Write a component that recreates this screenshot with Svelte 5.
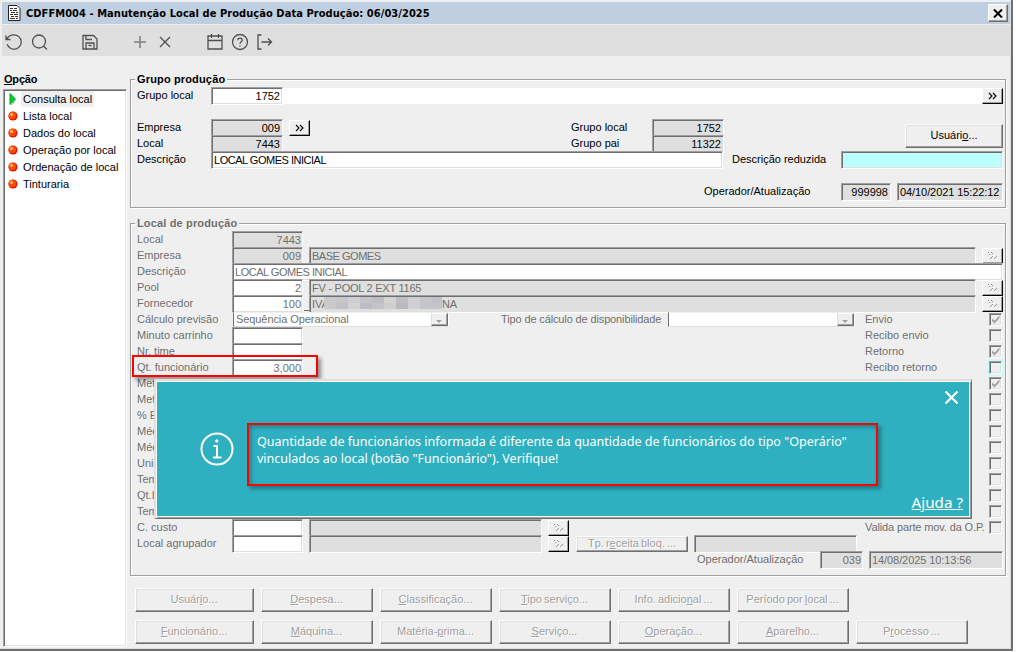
<script lang="ts">
  const options = ['Consulta local', 'Lista local', 'Dados do local', 'Operação por local', 'Ordenação de local', 'Tinturaria'];

  const hiddenRows = ['Met', 'Met', '% E', 'Méd', 'Méd', 'Unid', 'Tem', 'Qt.L', 'Tem'];

  // underlined access key sits between `pre` and `post`
  const actions = [
    [
      { pre: 'Usuár', key: 'i', post: 'o...' },
      { pre: '', key: 'D', post: 'espesa...' },
      { pre: '', key: 'C', post: 'lassificação...' },
      { pre: '', key: 'T', post: 'ipo serviço...' },
      { pre: 'Info. adicio', key: 'n', post: 'al ...' },
      { pre: 'Período por ', key: 'l', post: 'ocal ...' }
    ],
    [
      { pre: '', key: 'F', post: 'uncionário...' },
      { pre: '', key: 'M', post: 'áquina...' },
      { pre: 'Matéria-', key: 'p', post: 'rima...' },
      { pre: '', key: 'S', post: 'erviço...' },
      { pre: '', key: 'O', post: 'peração...' },
      { pre: '', key: 'A', post: 'parelho...' },
      { pre: 'P', key: 'r', post: 'ocesso ...' }
    ]
  ];

  const mosaic = ['#c9c8cb', '#c4c6ca', '#cfcfd1', '#c3c3c8', '#bdbdc3', '#d3d3d4', '#bebec4', '#d0d0d2', '#c6c6ca', '#bfc1c6', '#cbc9cc', '#c0c2c8', '#d2d2d2', '#bdbcc2', '#c4c4c8', '#cecece', '#b9b8bf', '#cfd0d3', '#c2c5cb', '#c5c4c6'];

  let selected = $state(0);
</script>

{#snippet check(on: boolean, hot = false)}
  <span class="check" class:hot>
    {#if on}
      <svg width="9" height="9" viewBox="0 0 9 9"><path d="M1 3.500v2.600L3.500 8.500 8.500 3V.6L3.500 5.800z" fill="#9f9f9f" /></svg>
    {/if}
  </span>
{/snippet}

{#snippet more(off: boolean)}
  <button class="more" aria-label="Pesquisar">
    {#if off}
      <svg width="11" height="8" viewBox="0 0 11 8" shape-rendering="crispEdges"><path d="M1 0h1v1H1zM4 0h1v1H4zM2 2h1v1H2zM5 1h1v1H5zM5 4h1v1H5zM4 5h1v1H4zM3 6h1v1H3zM9 4h1v1H9zM8 5h1v1H8zM7 6h1v1H7z" fill="#8f8f8f" /><path d="M6 5h1v1H6zM5 6h1v1H5zM4 7h1v1H4zM10 5h1v1H10zM9 6h1v1H9zM8 7h1v1H8z" fill="#fff" /></svg>
    {:else}
      <svg width="9" height="8" viewBox="0 0 9 8" fill="none" stroke="#000" stroke-width="1.100"><path d="M1 1l3 3-3 3M5 1l3 3-3 3" /></svg>
    {/if}
  </button>
{/snippet}

<div class="window">
  <header class="titlebar">
    <svg class="doc" width="13" height="16" viewBox="0 0 13 16"><path d="M.5.5H9L12 3.500V15.500H.5z" fill="#fff" stroke="#222" /><path d="M2 3.500h3M6 3.500h3M2 5.500h2M5 5.500h4M3 7.500h4M8 7.500h2M2 9.500h3M6 9.500h4M3 11.500h3M7 11.500h3M2 13.500h5M8 13.500h2" stroke="#333" /></svg>
    <h1>CDFFM004 - Manutenção Local de Produção Data Produção: 06/03/2025</h1>
    <button class="close" aria-label="Fechar">
      <svg width="10" height="9" viewBox="0 0 10 9"><path d="M1 .5l8 8M9 .5l-8 8" stroke="#000" stroke-width="2" /></svg>
    </button>
  </header>

  <div class="toolbar">
    <svg width="18" height="18" viewBox="0 0 18 18"><path d="M1 2.500v4h4.500M1.500 6.500C3 3.300 5.800 1.800 9 1.800a7.200 7.200 0 1 1-6.800 9.500" /></svg>
    <svg class="search" width="18" height="18" viewBox="0 0 18 18"><circle cx="8" cy="8.500" r="6.500" /><path d="M12.700 13.200l3.300 3.300" /></svg>
    <svg class="save" width="18" height="18" viewBox="0 0 18 18"><path d="M2 2.500h10.500l3.500 3.500v10H2zM5 16V10h8v6M5 2.500v4h6M7.500 12.500h3" /></svg>
    <svg class="add" width="18" height="18" viewBox="0 0 18 18"><path d="M9 3v12M3 9h12" /></svg>
    <svg class="del" width="18" height="18" viewBox="0 0 18 18"><path d="M4 4l10 10M14 4L4 14" /></svg>
    <svg class="cal" width="18" height="18" viewBox="0 0 18 18"><path d="M2 3h14v13H2zM2 7.500h14M5.500 1v4M12.500 1v4" /></svg>
    <svg class="help" width="18" height="18" viewBox="0 0 18 18"><circle cx="9" cy="9" r="7.500" /><path d="M6.700 7.200C6.800 4.500 11.400 4.600 11.300 7.200 11.200 8.800 9 8.800 9 10.700M9 12.200v1.300" /></svg>
    <svg class="exit" width="18" height="18" viewBox="0 0 18 18"><path d="M5.500 2H2v14h3.500M5.500 9h10M12 5.500L15.500 9 12 12.500" /></svg>
  </div>

  <main>
    <aside>
      <h2><u>O</u>pção</h2>
      <ul>
        {#each options as option, i}
          <li>
            <button class="option" onclick={() => (selected = i)}>
              {#if selected === i}
                <svg width="10" height="12" viewBox="0 0 10 12"><path d="M2 .5L7.500 6 2 11.500z" fill="#0c3" stroke="#0a2" /><path d="M4 11.500L7.500 7" stroke="#446" stroke-dasharray="1 1" /></svg>
              {:else}
                <svg width="10" height="12" viewBox="0 0 10 12"><circle cx="5" cy="6" r="4.600" fill="#dc1c00" /><circle cx="4.400" cy="5.400" r="3.700" fill="#ff4a00" /><circle cx="3.600" cy="4.400" r="1.600" fill="#ffb060" /></svg>
              {/if}
              <span class:current={selected === i}>{option}</span>
            </button>
          </li>
        {/each}
      </ul>
    </aside>

    <div class="content">
      <section class="group first">
        <h3>Grupo produção</h3>
        <div class="row">
          <span class="label">Grupo local</span>
          <span class="field num">1752</span>
          <span class="strip"></span>
          {@render more(false)}
        </div>
        <div class="row"></div>
        <div class="row">
          <span class="label">Empresa</span>
          <span class="field num ro">009</span>
          <span class="gap6"></span>
          {@render more(false)}
          <span class="label parent">Grupo local</span>
          <span class="field num ro">1752</span>
          <button class="btn user">Usuári<u>o</u>...</button>
        </div>
        <div class="row">
          <span class="label">Local</span>
          <span class="field num ro">7443</span>
          <span class="label parent second">Grupo pai</span>
          <span class="field num ro">11322</span>
        </div>
        <div class="row">
          <span class="label">Descrição</span>
          <span class="field name caps">LOCAL GOMES INICIAL</span>
          <span class="label short">Descrição reduzida</span>
          <span class="field hot"></span>
        </div>
        <div class="row"></div>
        <div class="row audit">
          <span class="label">Operador/Atualização</span>
          <span class="field num ro who">999998</span>
          <span class="field ro when">04/10/2021 15:22:12</span>
        </div>
      </section>

      <section class="group second-group">
        <h3>Local de produção</h3>
        <div class="row">
          <span class="label">Local</span>
          <span class="field num ro">7443</span>
        </div>
        <div class="row">
          <span class="label">Empresa</span>
          <span class="field num ro">009</span>
          <span class="field ro desc caps">BASE GOMES</span>
          {@render more(true)}
        </div>
        <div class="row">
          <span class="label">Descrição</span>
          <span class="field wide caps">LOCAL GOMES INICIAL</span>
        </div>
        <div class="row">
          <span class="label">Pool</span>
          <span class="field num">2</span>
          <span class="field ro desc pool">FV - POOL 2 EXT 1165</span>
          {@render more(true)}
        </div>
        <div class="row">
          <span class="label">Fornecedor</span>
          <span class="field num">100</span>
          <span class="stub"></span>
          <span class="field ro desc supplier">IVA<span class="mosaic">{#each mosaic as tone}<i style:background={tone}></i>{/each}</span>NA</span>
          {@render more(true)}
        </div>
        <div class="row">
          <span class="label">Cálculo previsão</span>
          <span class="combo">Sequência Operacional<b></b></span>
          <span class="label avail">Tipo de cálculo de disponibilidade</span>
          <span class="combo small"><b></b></span>
          <span class="label flag">Envio</span>
          {@render check(true)}
        </div>
        <div class="row">
          <span class="label">Minuto carrinho</span>
          <span class="field num"></span>
          <span class="label flag">Recibo envio</span>
          {@render check(false)}
        </div>
        <div class="row">
          <span class="label">Nr. time</span>
          <span class="field num"></span>
          <span class="label flag">Retorno</span>
          {@render check(true)}
        </div>
        <div class="row">
          <span class="label">Qt. funcionário</span>
          <span class="field num">3,000</span>
          <span class="label flag">Recibo retorno</span>
          {@render check(false, true)}
        </div>
        {#each hiddenRows as label, i}
          <div class="row">
            <span class="label">{label}</span>
            <span class="label flag"></span>
            {@render check(i === 0)}
          </div>
        {/each}
        <div class="row">
          <span class="label">C. custo</span>
          <span class="field num"></span>
          <span class="field ro cost"></span>
          {@render more(true)}
          <span class="label flag valid">Valida parte mov. da O.P.</span>
          {@render check(false)}
        </div>
        <div class="row">
          <span class="label">Local agrupador</span>
          <span class="field num"></span>
          <span class="field ro cost"></span>
          {@render more(true)}
          <button class="btn recipe" disabled>Tp. r<u>e</u>ceita bloq. ...</button>
          <span class="field ro block"></span>
        </div>
        <div class="row audit">
          <span class="label">Operador/Atualização</span>
          <span class="field num ro who">039</span>
          <span class="field ro when">14/08/2025 10:13:56</span>
        </div>
      </section>

      <div class="actions">
        {#each actions as line}
          <div class="line">
            {#each line as a}
              <button class="btn" disabled>{a.pre}<u>{a.key}</u>{a.post}</button>
            {/each}
          </div>
        {/each}
      </div>
    </div>
  </main>

  <div class="mark"></div>

  <div class="toast">
    <svg class="info" width="34" height="34" viewBox="0 0 34 34" fill="none" stroke="#fff" stroke-width="2"><circle cx="17" cy="17" r="15.500" /><path d="M13.500 14H17V25.500M13 25.500h8.500" /><circle cx="16.800" cy="9" r="1.200" fill="#fff" stroke-width="1" /></svg>
    <p>Quantidade de funcionários informada é diferente da quantidade de funcionários do tipo "Operário"<br />vinculados ao local (botão "Funcionário"). Verifique!</p>
    <svg class="dismiss" width="15" height="15" viewBox="0 0 15 15" stroke="#fff" stroke-width="2.200"><path d="M1.500 1.500l12 12M13.500 1.500l-12 12" /></svg>
    <a href="#ajuda">Ajuda ?</a>
  </div>
</div>

<style>
  :global(body) {
    background: #fff;
  }

  .window {
    position: relative;
    box-sizing: border-box;
    width: 1013px;
    height: 651px;
    padding: 2px 0 0 2px;
    background: #efefef;
    border-right: 2px solid #6f6f6f;
    border-bottom: 2px solid #6f6f6f;
    box-shadow: inset -1px -1px #dfdfdf;
    font: 11px/16px "Liberation Sans", Arial, sans-serif;
    color: #000;
  }

  button {
    font: inherit;
    color: inherit;
    padding: 0;
    margin: 0;
    border: 0;
    background: none;
  }

  .titlebar {
    display: flex;
    align-items: center;
    width: 1008px;
    height: 22px;
    background: #c0cfdf;
  }

  .doc {
    margin-left: 6px;
  }

  h1 {
    flex: 1;
    margin: 0 0 0 5px;
    padding-top: 1px;
    font: bold 11px/21px "DejaVu Sans Condensed", Tahoma, sans-serif;
    letter-spacing: 0.06px;
    white-space: nowrap;
  }

  .close {
    display: grid;
    place-items: center;
    width: 20px;
    height: 18px;
    margin-right: 2px;
    background: #efefef;
    border: 1px solid;
    border-color: #fff #6f6f6f #6f6f6f #fff;
    box-shadow: inset -1px -1px #9f9f9f;
    box-sizing: border-box;
  }

  .toolbar {
    display: flex;
    align-items: center;
    width: 1008px;
    height: 31px;
    margin-top: 1px;
    padding: 3px 0 0 3px;
    box-sizing: border-box;
    background: #dfdfdf;
  }

  .toolbar svg {
    fill: none;
    stroke: #505050;
    stroke-width: 1.3;
  }

  .search { margin-left: 8px; }
  .save { margin-left: 32px; }
  .toolbar .add {
    margin-left: 32px;
    stroke: #808080;
    stroke-width: 1.6;
  }
  .del { margin-left: 7px; }
  .cal { margin-left: 32px; }
  .help { margin-left: 7px; }
  .exit { margin-left: 7px; }

  main {
    display: flex;
    padding-top: 14px;
  }

  aside {
    width: 125px;
    margin-left: 1px;
  }

  h2, h3 {
    margin: 0;
    font-size: 11px;
    line-height: 16px;
    letter-spacing: 0.15px;
  }

  h2 {
    padding-left: 1px;
    height: 19px;
    line-height: 18px;
    letter-spacing: -0.2px;
  }

  ul {
    box-sizing: border-box;
    width: 124px;
    height: 558px;
    margin: 0;
    padding: 0 0 0 4px;
    list-style: none;
    background: #fff;
    border: 1px solid;
    border-color: #9f9f9f #fff #fff #9f9f9f;
    box-shadow: inset 1px 1px #6f6f6f, inset -1px -1px #dfdfdf;
  }

  .option {
    display: flex;
    align-items: center;
    height: 17px;
    gap: 3px;
    white-space: nowrap;
  }

  .option span {
    padding: 0 2px;
  }

  .option .current {
    background: #efefef;
  }

  .content {
    width: 877px;
    margin-left: 2px;
    padding-top: 9px;
  }

  .group {
    position: relative;
    box-sizing: border-box;
    width: 876px;
    padding: 7px 0 0 6px;
    border: 1px solid #9f9f9f;
    box-shadow: 1px 1px #fff, inset 1px 1px #fff;
  }

  .first {
    height: 129px;
  }

  .second-group {
    height: 353px;
    margin-top: 15px;
    color: #6f6f6f;
  }

  h3 {
    position: absolute;
    top: -9px;
    left: 4px;
    padding: 0 2px;
    background: #efefef;
    white-space: nowrap;
  }

  .row {
    display: flex;
    width: 866px;
    height: 16px;
  }

  .label {
    flex: none;
    width: 74px;
    white-space: nowrap;
  }

  .second-group .label {
    width: 95px;
  }

  .field {
    flex: none;
    box-sizing: border-box;
    height: 18px;
    padding: 0 2px;
    line-height: 16px;
    white-space: nowrap;
    background: #fff;
    border: 1px solid;
    border-color: #9f9f9f #fff #fff #9f9f9f;
    box-shadow: inset 1px 1px #6f6f6f, inset -1px -1px #dfdfdf;
  }

  .num {
    width: 72px;
    text-align: right;
  }

  .second-group .num {
    width: 71px;
    padding-right: 1px;
  }

  .ro {
    background: #dfdfdf;
  }

  .caps {
    letter-spacing: -0.48px;
  }

  .pool {
    letter-spacing: -0.25px;
  }

  .strip {
    width: 699px;
    height: 16px;
    margin-top: 1px;
    background: #fff;
  }

  .gap6 {
    flex: none;
    width: 6px;
  }

  .more {
    flex: none;
    display: grid;
    place-items: center;
    box-sizing: border-box;
    width: 21px;
    height: 16px;
    margin-top: 1px;
    background: #efefef;
    border: 1px solid;
    border-color: #fff #000 #000 #fff;
    box-shadow: inset -1px -1px #9f9f9f;
  }

  .row .parent {
    width: 81px;
    margin-left: 261px;
  }

  .row .second {
    margin-left: 288px;
  }

  .btn {
    box-sizing: border-box;
    height: 24px;
    padding-bottom: 2px;
    background: #efefef;
    border: 1px solid;
    border-color: #fff #6f6f6f #6f6f6f #fff;
    box-shadow: inset -1px -1px #9f9f9f, inset 1px 1px #dfdfdf;
    white-space: nowrap;
    word-spacing: -1px;
  }

  .btn:disabled {
    color: #9f9f9f;
    text-shadow: 1px 1px #fff;
  }

  .user {
    flex: none;
    width: 98px;
    margin: 5px 0 0 181px;
  }

  .name {
    width: 512px;
  }

  .row .short {
    width: 109px;
    margin-left: 9px;
  }

  .hot {
    width: 162px;
    background: #bff;
  }

  .audit {
    justify-content: flex-end;
  }

  .audit .label {
    width: 137px;
  }

  .second-group .audit .label {
    width: 123px;
  }

  .who {
    width: 50px;
    margin-right: 6px;
  }

  .when {
    width: 106px;
    letter-spacing: -0.08px;
  }

  .second-group .who {
    width: 43px;
  }

  .second-group .when {
    width: 134px;
  }

  .desc {
    width: 667px;
    margin: 0 6px;
  }

  .stub {
    width: 5px;
    height: 15px;
    margin-left: 1px;
    border-bottom: 1px solid #6f6f6f;
  }

  .supplier {
    display: flex;
    margin-left: 0;
  }

  .wide {
    width: 771px;
  }

  .mosaic {
    display: grid;
    grid-template-columns: repeat(10, 12px);
    grid-auto-rows: 6px;
    width: 118px;
    height: 12px;
    margin: 1px 0 0 -5px;
    overflow: hidden;
  }

  .combo {
    flex: none;
    display: flex;
    justify-content: space-between;
    box-sizing: border-box;
    width: 216px;
    height: 15px;
    margin: 1px 0 0 1px;
    padding-left: 2px;
    line-height: 13px;
    background: #fff;
    border: 1px solid;
    border-color: #efefef #fff #dfdfdf #6f6f6f;
    letter-spacing: -0.08px;
    white-space: nowrap;
  }

  .combo b {
    position: relative;
    width: 17px;
    height: 13px;
    box-sizing: border-box;
    background: #efefef;
    border: 1px solid;
    border-color: #fff #6f6f6f #6f6f6f #dfdfdf;
    box-shadow: inset -1px -1px #9f9f9f;
  }

  .combo b::after {
    content: '';
    position: absolute;
    left: 4px;
    top: 6px;
    border: 3px solid transparent;
    border-top-color: #9f9f9f;
    border-bottom: 0;
  }

  .second-group .avail {
    width: 167px;
    margin-left: 52px;
    letter-spacing: -0.13px;
  }

  .combo.small {
    width: 187px;
    margin-left: 0;
    justify-content: flex-end;
  }

  .second-group .flag {
    width: 124px;
    margin-left: auto;
  }

  .valid {
    letter-spacing: -0.13px;
  }

  .check {
    flex: none;
    box-sizing: border-box;
    display: block;
    width: 13px;
    height: 13px;
    margin: 2px 1px 0 0;
    border: 1px solid;
    border-color: #9f9f9f #fff #fff #9f9f9f;
    box-shadow: inset 1px 1px #6f6f6f, inset -1px -1px #dfdfdf;
  }

  .check svg {
    display: block;
    margin: 1px;
  }

  .check.hot {
    background: #efefef;
    outline: 1px solid #bff;
  }

  .cost {
    width: 233px;
    margin: 0 6px;
  }

  .recipe {
    width: 112px;
    height: 16px;
    margin: 1px 6px 0 7px;
    line-height: 13px;
  }

  .block {
    width: 163px;
  }

  .actions {
    padding: 12px 0 0 5px;
  }

  .line {
    display: flex;
    gap: 7px;
    margin-bottom: 8px;
  }

  .line .btn {
    width: 112px;
    padding-right: 1px;
  }

  .line .btn:first-child {
    width: 119px;
  }

  .mark {
    position: absolute;
    left: 132px;
    top: 355px;
    width: 182px;
    height: 18px;
    border: 2px solid #f00;
    box-shadow: 3px 3px 4px rgba(0, 0, 0, 0.4);
  }

  .toast {
    position: absolute;
    left: 154px;
    top: 379px;
    box-sizing: border-box;
    width: 818px;
    height: 140px;
    background: #2eb0c1;
    border-style: solid;
    border-width: 2px 1px 1px 2px;
    border-color: #dfdfdf #6f6f6f #6f6f6f #dfdfdf;
    box-shadow: inset 1px 1px #fff, inset -1px -1px #9f9f9f, inset -2px -2px #fff;
    color: #fff;
    font-family: "Noto Sans", "Segoe UI", sans-serif;
  }

  .info {
    position: absolute;
    left: 44px;
    top: 51px;
  }

  .toast p {
    position: absolute;
    left: 91px;
    top: 42px;
    box-sizing: border-box;
    width: 631px;
    height: 63px;
    margin: 0;
    padding: 8px 0 0 8px;
    border: 2px solid #f00;
    box-shadow: 3px 3px 4px rgba(0, 0, 0, 0.3), inset 2px 2px 4px rgba(0, 0, 0, 0.3);
    font-size: 12.53px;
    line-height: 17px;
    white-space: nowrap;
  }

  .dismiss {
    position: absolute;
    right: 12px;
    top: 9px;
  }

  .toast a {
    position: absolute;
    right: 8px;
    bottom: 5px;
    color: #fff;
    font-size: 15.2px;
    line-height: 22px;
  }
</style>
